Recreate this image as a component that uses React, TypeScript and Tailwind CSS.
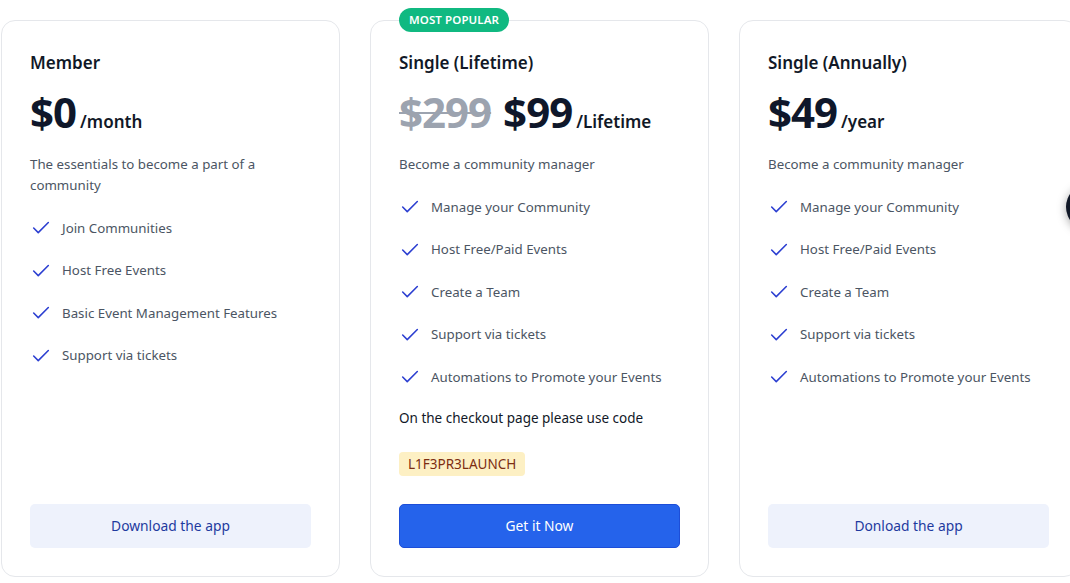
import { Check } from 'lucide-react'

type Plan = {
  name: string
  oldPrice?: string
  price: string
  period: string
  description: string
  features: string[]
  cta: string
  popular?: boolean
  code?: string
}

const plans: Plan[] = [
  {
    name: 'Member',
    price: '$0',
    period: '/month',
    description: 'The essentials to become a part of a community',
    features: ['Join Communities', 'Host Free Events', 'Basic Event Management Features', 'Support via tickets'],
    cta: 'Download the app',
  },
  {
    name: 'Single (Lifetime)',
    oldPrice: '$299',
    price: '$99',
    period: '/Lifetime',
    description: 'Become a community manager',
    features: [
      'Manage your Community',
      'Host Free/Paid Events',
      'Create a Team',
      'Support via tickets',
      'Automations to Promote your Events',
    ],
    cta: 'Get it Now',
    popular: true,
    code: 'L1F3PR3LAUNCH',
  },
  {
    name: 'Single (Annually)',
    price: '$49',
    period: '/year',
    description: 'Become a community manager',
    features: [
      'Manage your Community',
      'Host Free/Paid Events',
      'Create a Team',
      'Support via tickets',
      'Automations to Promote your Events',
    ],
    cta: 'Donload the app',
  },
]

function PlanCard({ plan }: { plan: Plan }) {
  return (
    <div className="relative flex h-[557px] w-[339px] shrink-0 flex-col rounded-[14px] border border-[#e5e7eb] bg-white px-[28px] pb-[28px] pt-[29px]">
      {plan.popular && (
        <span className="absolute left-[28px] top-[-13px] flex h-[24px] w-[110px] items-center justify-center rounded-full bg-[#10b981] text-[11.5px] font-semibold tracking-[0.1px] text-white">
          MOST POPULAR
        </span>
      )}
      <h3 className="text-[17px] font-semibold leading-[26px] text-[#111827]">{plan.name}</h3>
      <div className="mt-[12px] flex h-[48px] items-baseline">
        {plan.oldPrice && (
          <span className="mr-[12px] text-[42px] font-bold leading-[48px] tracking-[-1px] text-[#9ca3af] line-through decoration-[2px]">
            {plan.oldPrice}
          </span>
        )}
        <span className="text-[42px] font-bold leading-[48px] tracking-[-1px] text-[#0f172a]">{plan.price}</span>
        <span className="ml-[4px] text-[17px] font-semibold leading-none text-[#111827]">{plan.period}</span>
      </div>
      <p className="mt-[18px] text-[13.3px] leading-[21px] text-[#4b5563]">{plan.description}</p>
      <ul className="mt-[21px] flex flex-col gap-[20.5px]">
        {plan.features.map((f) => (
          <li key={f} className="flex items-center gap-[10px] text-[13.3px] leading-[21px] text-[#4b5563]">
            <Check className="h-[22px] w-[22px] shrink-0 text-[#2c3fd1]" strokeWidth={1.7} />
            {f}
          </li>
        ))}
      </ul>
      {plan.code && (
        <>
          <p className="mt-[20px] text-[13.5px] leading-[21px] text-[#111827]">On the checkout page please use code</p>
          <div className="mt-[22px]">
            <span className="inline-flex h-[24px] items-center rounded-[4px] bg-[#fdf0c4] px-[9px] text-[13.5px] text-[#7c2d12]">
              {plan.code}
            </span>
          </div>
        </>
      )}
      <button
        className={
          plan.popular
            ? 'mt-auto h-[44px] w-full rounded-[5px] border border-[#1d4ed8] bg-[#2563eb] text-[13.8px] text-white'
            : 'mt-auto h-[44px] w-full rounded-[5px] bg-[#eef2fc] text-[13.8px] text-[#1e3a9f]'
        }
      >
        {plan.cta}
      </button>
    </div>
  )
}

export default function App() {
  return (
    <div
      className="relative h-[583px] w-[1070px] overflow-hidden bg-white"
      style={{ fontFamily: '"Noto Sans", "Open Sans", sans-serif' }}
    >
      <div className="flex gap-[30px] pl-[1px] pt-[20px]">
        {plans.map((p) => (
          <PlanCard key={p.name} plan={p} />
        ))}
      </div>
      <div className="absolute left-[1066px] top-[184px] h-[46px] w-[46px] rounded-full bg-[#111827] shadow-[0_2px_10px_rgba(0,0,0,0.35)]" />
    </div>
  )
}
